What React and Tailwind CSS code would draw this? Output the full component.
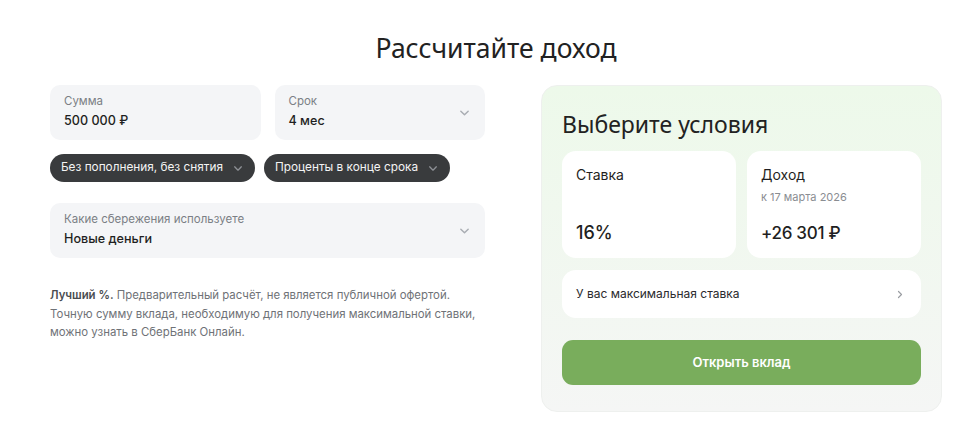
import React from 'react';

const Chevron = ({ className = '' }) => (
  <svg viewBox="0 0 12 8" className={className} fill="none" stroke="currentColor" strokeWidth="1.6" strokeLinecap="round" strokeLinejoin="round">
    <path d="M2 2l4 4 4-4" />
  </svg>
);

const Field = ({ label, value, arrow }) => (
  <div className="relative rounded-[10px] bg-[#f4f5f7] pl-[14px] pr-[15px] pt-[8px] h-[55px]">
    <div className="flex flex-col">
      <span className="text-[11.5px] leading-[16px] text-[#7b7f85]">{label}</span>
      <span className="text-[12.6px] leading-[18px] mt-[3px] font-medium text-[#1f1f22]">{value}</span>
    </div>
    {arrow && <Chevron className="absolute right-[15px] top-[24px] w-[11px] h-[8px] text-[#a9adb3]" />}
  </div>
);

const Pill = ({ children }) => (
  <div className="flex items-center gap-[10px] h-[28px] rounded-full bg-[#393b3d] pl-[11px] pr-[12px] text-[11.8px] text-[#f4f4f4]">
    <span>{children}</span>
    <Chevron className="w-[10px] h-[7px] text-[#8d9095]" />
  </div>
);

export default function App() {
  return (
    <div className="min-h-screen bg-white font-['Inter','Noto_Sans',sans-serif] text-[#1f1f22]">
      <div className="w-[892px] ml-[50px] pt-[30px]">
        <h1 className="text-center text-[26.5px] leading-[36px] font-normal text-[#222] font-['Noto_Sans',sans-serif]">
          Рассчитайте доход
        </h1>
        <div className="flex gap-[56px] mt-[19px]">
          <div className="w-[435px] flex flex-col">
            <div className="grid grid-cols-2 gap-[14px]">
              <Field label="Сумма" value="500 000 ₽" />
              <Field label="Срок" value="4 мес" arrow />
            </div>
            <div className="flex gap-[9px] mt-[14px]">
              <Pill>Без пополнения, без снятия</Pill>
              <Pill>Проценты в конце срока</Pill>
            </div>
            <div className="mt-[21px]">
              <Field label="Какие сбережения используете" value="Новые деньги" arrow />
            </div>
            <p className="mt-[28px] text-[11.4px] leading-[18.5px] text-[#6f7277] whitespace-nowrap">
              <span className="font-semibold text-[#4a4c50]">Лучший %.</span> Предварительный расчёт, не является публичной офертой.
              <br />
              Точную сумму вклада, необходимую для получения максимальной ставки,
              <br />
              можно узнать в СберБанк Онлайн.
            </p>
          </div>
          <div className="w-[401px] h-[327px] rounded-[16px] border border-[#eef0ee] bg-gradient-to-b from-[#edf9ea] to-[#f5f6f5] px-[20px] pt-[24px]">
            <h2 className="text-[23px] leading-[28px] font-normal text-[#222] font-['Noto_Sans',sans-serif]">Выберите условия</h2>
            <div className="grid grid-cols-2 gap-[11px] mt-[13px]">
              <div className="bg-white rounded-[14px] h-[107px] px-[14px] pt-[14px] flex flex-col">
                <span className="text-[14px] leading-[20px]">Ставка</span>
                <span className="mt-auto mb-[13px] text-[18px] leading-[24px] font-medium">16%</span>
              </div>
              <div className="bg-white rounded-[14px] h-[107px] px-[14px] pt-[14px] flex flex-col">
                <span className="text-[14px] leading-[20px]">Доход</span>
                <span className="text-[11px] leading-[16px] mt-[4px] text-[#8a8d92]">к 17 марта 2026</span>
                <span className="mt-auto mb-[13px] text-[17px] leading-[24px] font-medium tracking-[-0.3px]">+26 301 ₽</span>
              </div>
            </div>
            <div className="mt-[12px] bg-white rounded-[14px] h-[48px] flex items-center justify-between pl-[14px] pr-[18px]">
              <span className="text-[12px] text-[#2a2a2d]">У вас максимальная ставка</span>
              <svg viewBox="0 0 8 12" className="w-[6px] h-[9px] text-[#9a9da2]" fill="none" stroke="currentColor" strokeWidth="1.6" strokeLinecap="round" strokeLinejoin="round">
                <path d="M2 2l4 4-4 4" />
              </svg>
            </div>
            <button className="mt-[22px] w-full h-[45px] rounded-[11px] bg-[#79ad5c] text-white text-[13px] font-semibold">
              Открыть вклад
            </button>
          </div>
        </div>
      </div>
    </div>
  );
}
